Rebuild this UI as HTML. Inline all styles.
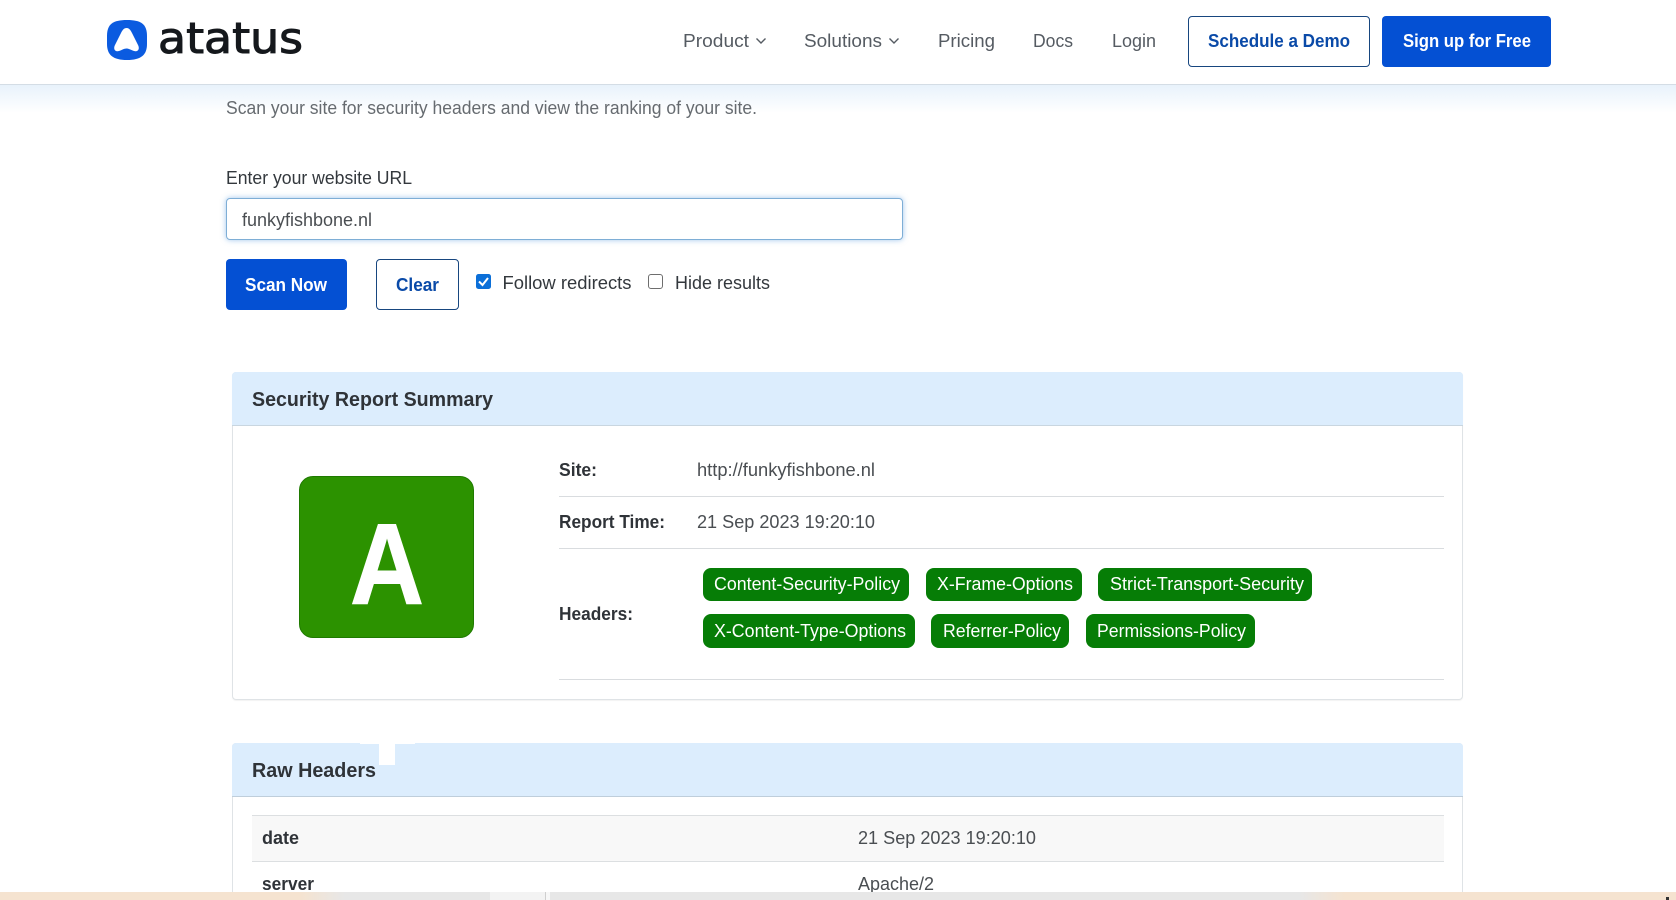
<!DOCTYPE html>
<html lang="en"><head><meta charset="utf-8"><title>Security Headers Scan</title>
<style>
html,body{margin:0;padding:0;width:1676px;height:900px;overflow:hidden;background:#fff}
#w{position:relative;width:1676px;height:900px;overflow:hidden;background:#fff}
.b{position:absolute;box-sizing:border-box}
svg{position:absolute;left:0;top:0}
text{font-family:"Liberation Sans",sans-serif;font-size:18px}
.nav{fill:#555b62}.sub{fill:#666b70}.lab{fill:#33383d}.bd{font-weight:700;fill:#2f3338}
.val{fill:#4a4e52}.pill{fill:#fff}
</style></head><body><div id="w">
<div class="b" style="left:0;top:0;width:1676px;height:85px;background:#fff;border-bottom:1px solid #d4dde5"></div>
<div class="b" style="left:0;top:85px;width:1676px;height:28px;background:linear-gradient(#e8f2fb,#fff)"></div>

<div class="b" style="left:1188px;top:16px;width:182px;height:51px;border:1px solid #17467f;border-radius:4px"></div>
<div class="b" style="left:1382px;top:16px;width:169px;height:51px;background:#0450d3;border-radius:4px"></div>

<div class="b" style="left:226px;top:198px;width:677px;height:42px;background:#fff;border:1px solid #7eaed6;border-radius:4px;box-shadow:0 0 6px rgba(80,150,220,.55)"></div>
<div class="b" style="left:226px;top:259px;width:121px;height:51px;background:#0450d3;border-radius:4px"></div>
<div class="b" style="left:376px;top:259px;width:83px;height:51px;border:1px solid #17467f;border-radius:4px"></div>

<!-- summary card -->
<div class="b" style="left:232px;top:372px;width:1231px;height:328px;border:1px solid #dfe3e6;border-radius:4px;box-shadow:0 1px 1px rgba(0,0,0,.05)"></div>
<div class="b" style="left:232px;top:372px;width:1231px;height:54px;background:#dcedfd;border-bottom:1px solid #c9d6e0;border-radius:4px 4px 0 0"></div>
<div class="b" style="left:299px;top:476px;width:175px;height:162px;background:#2c9200;border:1px solid #1f7a00;border-radius:14px"></div>
<div class="b" style="left:559px;top:496px;width:885px;height:1px;background:#d9dcdf"></div>
<div class="b" style="left:559px;top:548px;width:885px;height:1px;background:#d9dcdf"></div>
<div class="b" style="left:559px;top:679px;width:885px;height:1px;background:#d9dcdf"></div>

<div class="b" style="left:703px;top:568px;width:206px;height:33px;background:#067d06;border-radius:8px"></div>
<div class="b" style="left:926px;top:568px;width:156px;height:33px;background:#067d06;border-radius:8px"></div>
<div class="b" style="left:1098px;top:568px;width:214px;height:33px;background:#067d06;border-radius:8px"></div>
<div class="b" style="left:703px;top:614px;width:212px;height:34px;background:#067d06;border-radius:8px"></div>
<div class="b" style="left:931px;top:614px;width:138px;height:34px;background:#067d06;border-radius:8px"></div>
<div class="b" style="left:1086px;top:614px;width:169px;height:34px;background:#067d06;border-radius:8px"></div>

<!-- raw headers card -->
<div class="b" style="left:232px;top:743px;width:1231px;height:157px;border:1px solid #dfe3e6;border-bottom:0;border-radius:4px 4px 0 0"></div>
<div class="b" style="left:232px;top:743px;width:1231px;height:54px;background:#dcedfd;border-bottom:1px solid #bfcedb;border-radius:4px 4px 0 0"></div>
<div class="b" style="left:379px;top:743px;width:16px;height:22px;background:#fff"></div>
<div class="b" style="left:360px;top:741px;width:55px;height:3px;background:#fff"></div>
<div class="b" style="left:252px;top:815px;width:1192px;height:47px;background:#f8f8f8;border-top:1px solid #dcdfe1;border-bottom:1px solid #dcdfe1"></div>

<svg width="1676" height="900" viewBox="0 0 1676 900">
<!-- logo -->
<path d="M107 36C107 24 113 20 127 20C141 20 147 24 147 36V44C147 55 141 60 127 60C113 60 107 55 107 44Z" fill="#0b5be0"/>
<path d="M126.500 28C129 28 130.500 30 132 33L138 45C140 49 138 52 134 51C131 50 129 48.500 126.500 48.500C124 48.500 122 50 119 51C115 52 113 49 115 45L121 33C122.500 30 124 28 126.500 28Z" fill="#fff"/>
<text x="158" y="53" textLength="145" lengthAdjust="spacingAndGlyphs" style="font-size:43px;font-family:'DejaVu Sans','Liberation Sans',sans-serif" fill="#15181c" stroke="#15181c" stroke-width="1">atatus</text>

<text class="nav" x="683" y="47" textLength="66" lengthAdjust="spacingAndGlyphs">Product</text>
<path d="M756.500 38.500L761 43L765.500 38.500" fill="none" stroke="#555b62" stroke-width="1.400"/>
<text class="nav" x="804" y="47" textLength="78" lengthAdjust="spacingAndGlyphs">Solutions</text>
<path d="M889.500 38.500L894 43L898.500 38.500" fill="none" stroke="#555b62" stroke-width="1.400"/>
<text class="nav" x="938" y="47" textLength="57" lengthAdjust="spacingAndGlyphs">Pricing</text>
<text class="nav" x="1033" y="47" textLength="40" lengthAdjust="spacingAndGlyphs">Docs</text>
<text class="nav" x="1112" y="47" textLength="44" lengthAdjust="spacingAndGlyphs">Login</text>
<text x="1208" y="47" textLength="142" lengthAdjust="spacingAndGlyphs" font-weight="700" fill="#0a4aa8">Schedule a Demo</text>
<text x="1403" y="47" textLength="128" lengthAdjust="spacingAndGlyphs" font-weight="700" fill="#fff">Sign up for Free</text>

<text class="sub" x="226" y="114" textLength="531" lengthAdjust="spacingAndGlyphs">Scan your site for security headers and view the ranking of your site.</text>
<text class="lab" x="226" y="184" textLength="186" lengthAdjust="spacingAndGlyphs">Enter your website URL</text>
<text class="val" x="242" y="226" textLength="130" lengthAdjust="spacingAndGlyphs">funkyfishbone.nl</text>
<text x="245" y="291" textLength="82" lengthAdjust="spacingAndGlyphs" font-weight="700" fill="#fff">Scan Now</text>
<text x="396" y="291" textLength="43" lengthAdjust="spacingAndGlyphs" font-weight="700" fill="#0a4aa8">Clear</text>

<rect x="476" y="274" width="15" height="15" rx="2.500" fill="#0b6fd8"/>
<path d="M479 281.500L482.500 285L488 278" fill="none" stroke="#fff" stroke-width="2"/>
<text class="lab" x="502.500" y="289" textLength="129" lengthAdjust="spacingAndGlyphs">Follow redirects</text>
<rect x="648.500" y="274.500" width="14" height="14" rx="2.500" fill="#fff" stroke="#6e6e6e"/>
<text class="lab" x="675" y="289" textLength="95" lengthAdjust="spacingAndGlyphs">Hide results</text>

<text class="bd" x="252" y="406" textLength="241" lengthAdjust="spacingAndGlyphs" style="font-size:20px">Security Report Summary</text>
<text x="350" y="604" textLength="74" lengthAdjust="spacingAndGlyphs" style="font-size:115px" font-weight="700" fill="#fff" stroke="#fff" stroke-width="1">A</text>

<text class="bd" x="559" y="476" textLength="38" lengthAdjust="spacingAndGlyphs">Site:</text>
<text class="val" x="697" y="476" textLength="178" lengthAdjust="spacingAndGlyphs">http://funkyfishbone.nl</text>
<text class="bd" x="559" y="528" textLength="106" lengthAdjust="spacingAndGlyphs">Report Time:</text>
<text class="val" x="697" y="528" textLength="178" lengthAdjust="spacingAndGlyphs">21 Sep 2023 19:20:10</text>
<text class="bd" x="559" y="620" textLength="74" lengthAdjust="spacingAndGlyphs">Headers:</text>

<text class="pill" x="714" y="590" textLength="186" lengthAdjust="spacingAndGlyphs">Content-Security-Policy</text>
<text class="pill" x="937" y="590" textLength="136" lengthAdjust="spacingAndGlyphs">X-Frame-Options</text>
<text class="pill" x="1110" y="590" textLength="194" lengthAdjust="spacingAndGlyphs">Strict-Transport-Security</text>
<text class="pill" x="714" y="637" textLength="192" lengthAdjust="spacingAndGlyphs">X-Content-Type-Options</text>
<text class="pill" x="943" y="637" textLength="118" lengthAdjust="spacingAndGlyphs">Referrer-Policy</text>
<text class="pill" x="1097" y="637" textLength="149" lengthAdjust="spacingAndGlyphs">Permissions-Policy</text>

<text class="bd" x="252" y="777" textLength="124" lengthAdjust="spacingAndGlyphs" style="font-size:20px">Raw Headers</text>
<text class="bd" x="262" y="844" textLength="37" lengthAdjust="spacingAndGlyphs">date</text>
<text class="val" x="858" y="844" textLength="178" lengthAdjust="spacingAndGlyphs">21 Sep 2023 19:20:10</text>
<text class="bd" x="262" y="890" textLength="52" lengthAdjust="spacingAndGlyphs">server</text>
<text class="val" x="858" y="890" textLength="76" lengthAdjust="spacingAndGlyphs">Apache/2</text>
</svg>

<div class="b" style="left:0;top:892px;width:1676px;height:8px;background:linear-gradient(90deg,#f5e3d0 0,#f5e3d0 300px,#e7e7e7 345px,#e7e7e7 1300px,#f5e3d0 1345px,#f5e3d0 100%)"></div>
<div class="b" style="left:490px;top:892px;width:55px;height:8px;background:#f3f3f3"></div>
<div class="b" style="left:545px;top:892px;width:1px;height:8px;background:#cfcfcf"></div>
<div class="b" style="left:546px;top:892px;width:4px;height:8px;background:#f7f7f7"></div>
<div class="b" style="left:1666px;top:897px;width:3px;height:3px;background:#333"></div>
</div></body></html>
